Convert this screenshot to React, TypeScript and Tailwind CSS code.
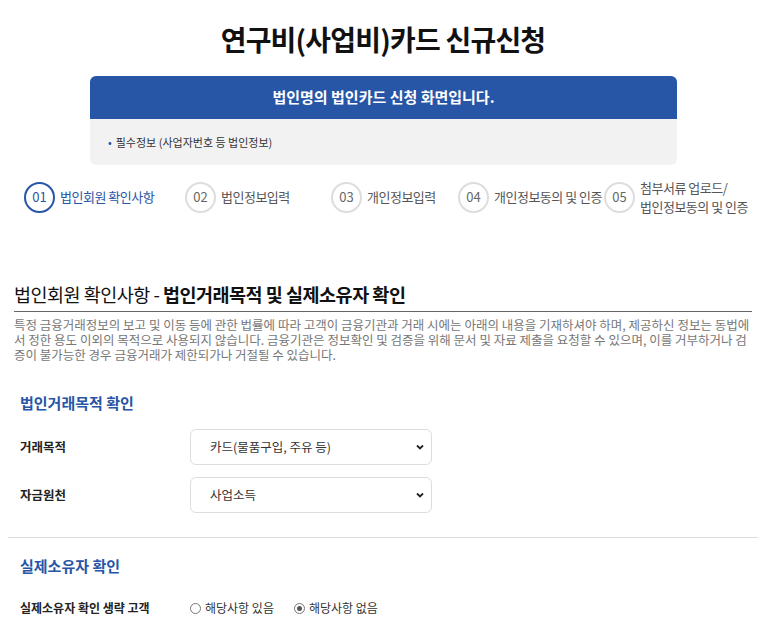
import { useState } from 'react';

const steps = [
  { no: '01', label: '법인회원 확인사항', width: 'w-[161px]', active: true },
  { no: '02', label: '법인정보입력', width: 'w-[146px]', active: false },
  { no: '03', label: '개인정보입력', width: 'w-[127px]', active: false },
  { no: '04', label: '개인정보동의 및 인증', width: 'w-[146px]', active: false },
];

export default function App() {
  const [purpose, setPurpose] = useState('card');
  const [source, setSource] = useState('biz');
  const [owner, setOwner] = useState<'yes' | 'no'>('no');

  return (
    <div className="min-h-screen bg-white font-['Noto_Sans_CJK_KR','Noto_Sans',sans-serif] text-[#222]">
      {/* Title */}
      <h1 className="pt-[17px] text-center text-[28px] font-bold leading-[44px] tracking-[-0.8px] text-[#111]">
        연구비(사업비)카드 신규신청
      </h1>

      {/* Notice box */}
      <div className="mx-[90px] mt-[15px] w-[587px] overflow-hidden rounded-[6px] bg-[#f2f2f2]">
        <div className="flex h-[43px] items-center justify-center bg-[#2756a6] text-[15px] font-bold text-white">
          법인명의 법인카드 신청 화면입니다.
        </div>
        <div className="flex h-[46px] items-center pl-[18px] text-[11px] text-[#333]">
          <span className="mr-[4px] text-[#2756a6]">•</span>
          필수정보 (사업자번호 등 법인정보)
        </div>
      </div>

      {/* Steps */}
      <div className="mt-[13px] flex h-[38px] items-center pl-[24px]">
        {steps.map((s) => (
          <div key={s.no} className={`flex items-center ${s.width}`}>
            <div
              className={`flex h-[31px] w-[31px] shrink-0 items-center justify-center rounded-full border-2 text-[13px] ${
                s.active ? 'border-[#2756a6] text-[#2756a6]' : 'border-[#ddd] text-[#666]'
              }`}
            >
              {s.no}
            </div>
            <span
              className={`ml-[5px] whitespace-nowrap text-[13px] tracking-[-0.5px] ${
                s.active ? 'text-[#2756a6]' : 'text-[#555]'
              }`}
            >
              {s.label}
            </span>
          </div>
        ))}
        <div className="flex items-center">
          <div className="flex h-[31px] w-[31px] shrink-0 items-center justify-center rounded-full border-2 border-[#ddd] text-[13px] text-[#666]">
            05
          </div>
          <div className="ml-[5px] flex flex-col text-[13px] leading-[19px] tracking-[-0.5px] text-[#555]">
            <span>첨부서류 업로드/</span>
            <span>법인정보동의 및 인증</span>
          </div>
        </div>
      </div>

      {/* Section heading */}
      <div className="mx-[14px] mt-[66px] border-b border-[#666] pb-[5px]">
        <h2 className="text-[18.5px] leading-[24px] tracking-[-0.5px] text-[#111]">
          법인회원 확인사항 - <b className="font-bold">법인거래목적 및 실제소유자 확인</b>
        </h2>
      </div>
      <p className="mx-[14px] mt-[5px] text-[12.5px] leading-[15px] tracking-[0px] text-[#777]">
        특정 금융거래정보의 보고 및 이동 등에 관한 법률에 따라 고객이 금융기관과 거래 시에는 아래의 내용을 기재하셔야 하며, 제공하신 정보는 동법에서 정한 용도 이외의 목적으로 사용되지 않습니다. 금융기관은 정보확인 및 검증을 위해 문서 및 자료 제출을 요청할 수 있으며, 이를 거부하거나 검증이 불가능한 경우 금융거래가 제한되가나 거절될 수 있습니다.
      </p>

      {/* Purpose */}
      <h3 className="ml-[20px] mt-[31px] text-[15px] font-bold leading-[20px] text-[#2756a6]">법인거래목적 확인</h3>
      <div className="ml-[20px] mt-[16px] flex flex-col gap-[12px]">
        <div className="flex items-center">
          <label className="w-[170px] text-[12.5px] font-bold text-[#222]">거래목적</label>
          <div className="relative w-[242px]">
            <select
              value={purpose}
              onChange={(e) => setPurpose(e.target.value)}
              className="h-[36px] w-full appearance-none rounded-[6px] border border-[#ddd] bg-white pl-[19px] text-[12.5px] text-[#333] outline-none"
            >
              <option value="card">카드(물품구입, 주유 등)</option>
              <option value="etc">기타</option>
            </select>
            <Chevron />
          </div>
        </div>
        <div className="flex items-center">
          <label className="w-[170px] text-[12.5px] font-bold text-[#222]">자금원천</label>
          <div className="relative w-[242px]">
            <select
              value={source}
              onChange={(e) => setSource(e.target.value)}
              className="h-[36px] w-full appearance-none rounded-[6px] border border-[#ddd] bg-white pl-[19px] text-[12.5px] text-[#333] outline-none"
            >
              <option value="biz">사업소득</option>
              <option value="etc">기타</option>
            </select>
            <Chevron />
          </div>
        </div>
      </div>

      <hr className="mx-[8px] mt-[24px] border-t border-[#ddd]" />

      {/* Owner */}
      <h3 className="ml-[20px] mt-[18px] text-[15px] font-bold leading-[20px] text-[#2756a6]">실제소유자 확인</h3>
      <div className="ml-[20px] mt-[23px] flex items-center text-[12px]">
        <span className="w-[170px] font-bold text-[#222]">실제소유자 확인 생략 고객</span>
        <label className="flex items-center gap-[4px] text-[#333]" onClick={() => setOwner('yes')}>
          <Radio checked={owner === 'yes'} />
          해당사항 있음
        </label>
        <label className="ml-[20px] flex items-center gap-[4px] text-[#333]" onClick={() => setOwner('no')}>
          <Radio checked={owner === 'no'} />
          해당사항 없음
        </label>
      </div>
    </div>
  );
}

function Chevron() {
  return (
    <svg
      className="pointer-events-none absolute right-[8px] top-1/2 -translate-y-1/2"
      width="8"
      height="6"
      viewBox="0 0 8 6"
    >
      <path d="M1 1.5 L4 4.5 L7 1.5" fill="none" stroke="#222" strokeWidth="1.8" />
    </svg>
  );
}

function Radio({ checked }: { checked: boolean }) {
  return (
    <span className="flex h-[11px] w-[11px] items-center justify-center rounded-full border border-[#777] bg-white">
      {checked && <span className="h-[5px] w-[5px] rounded-full bg-[#555]" />}
    </span>
  );
}
